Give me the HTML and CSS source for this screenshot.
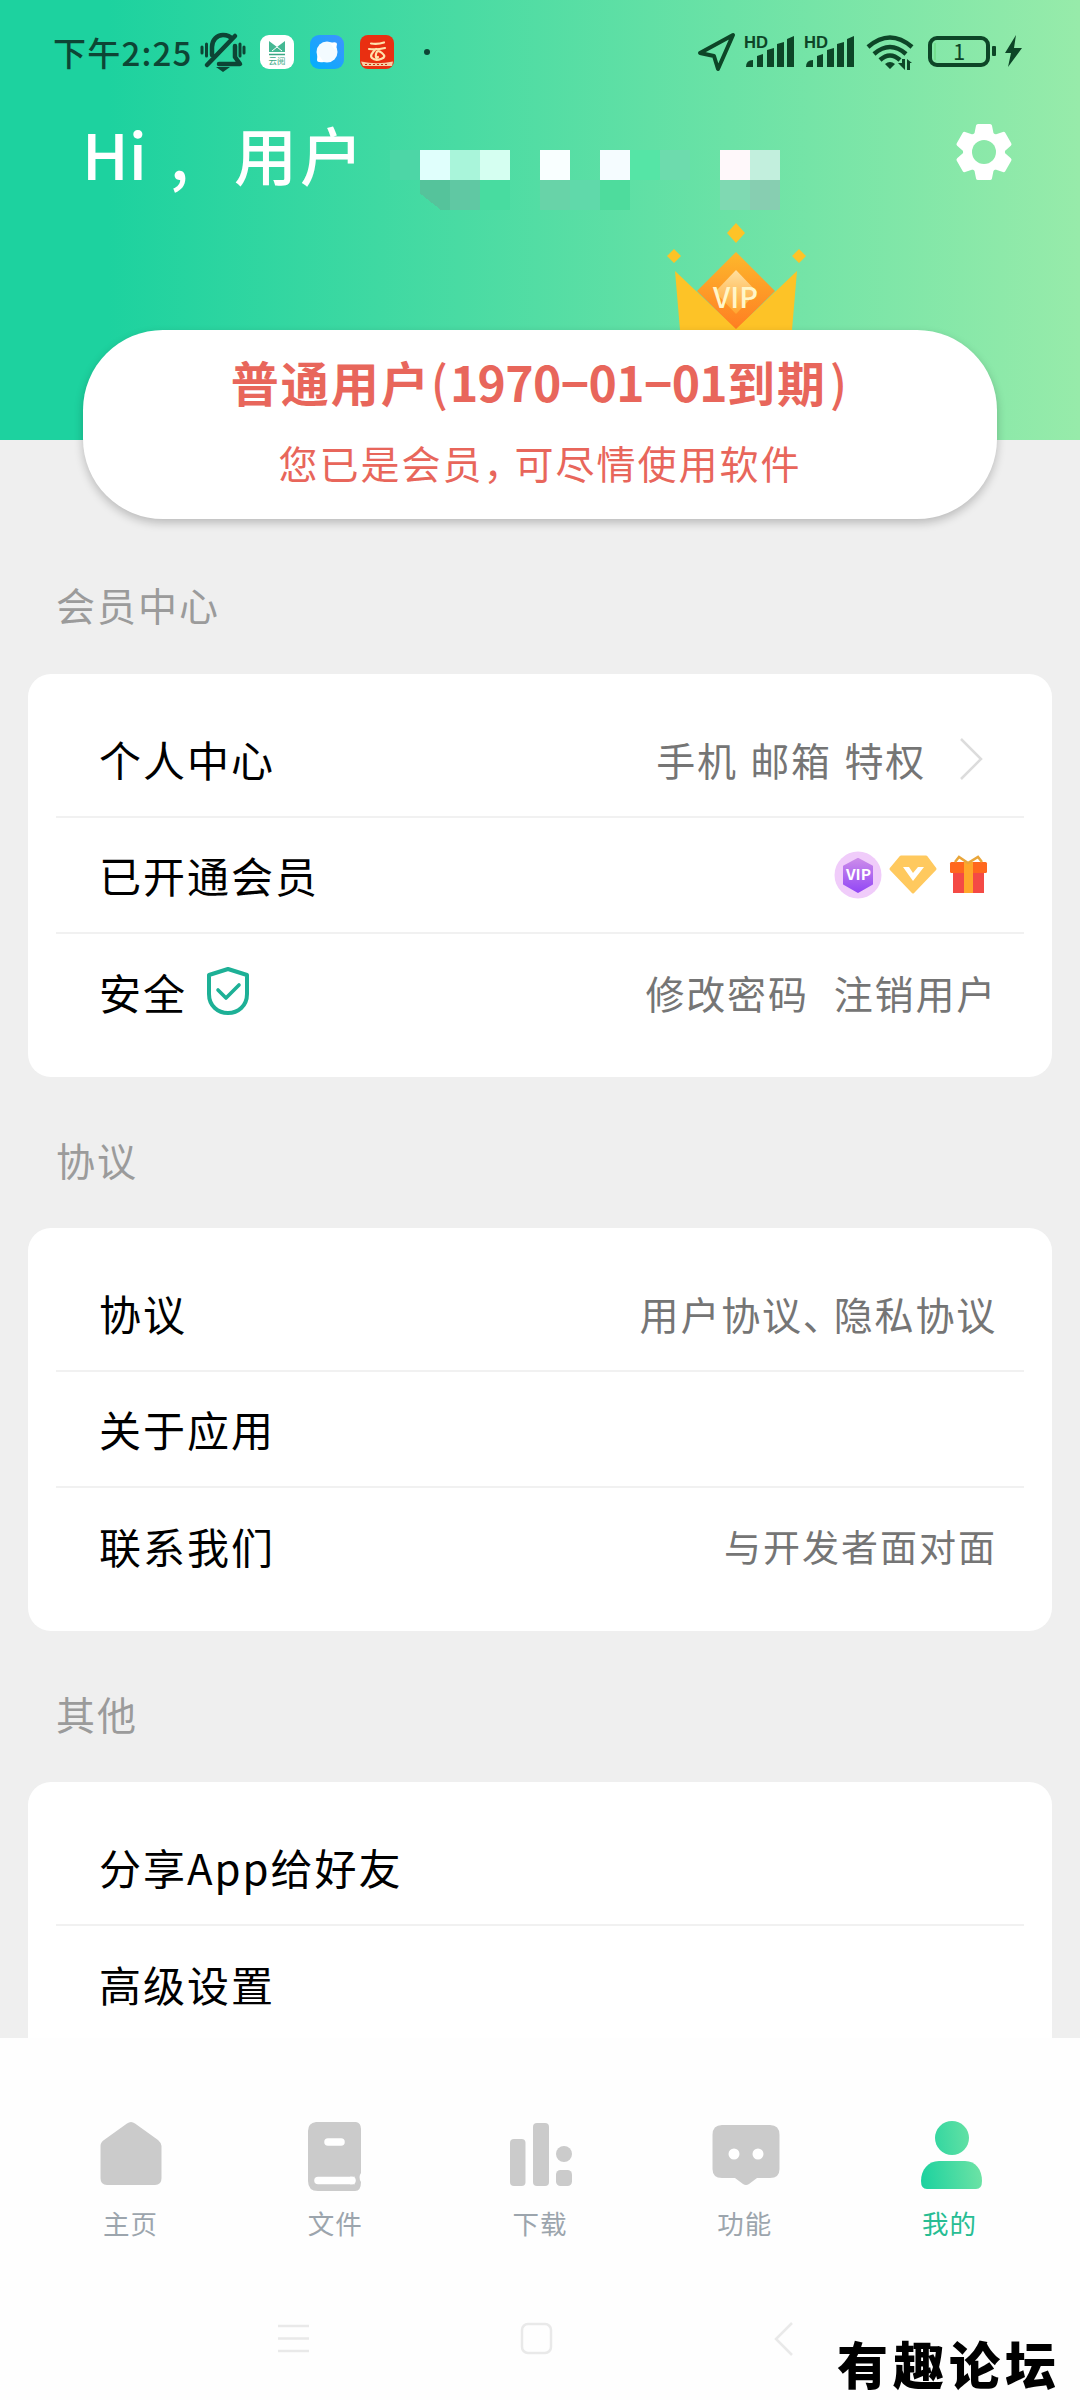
FILE: index.html
```html
<!DOCTYPE html>
<html lang="zh-CN">
<head>
<meta charset="utf-8">
<title>我的</title>
<link rel="stylesheet" href="styles.css">
</head>
<body>
<div class="screen">
  <header class="header">
    <div class="status">
      <span class="clock">下午2:25</span>
      <svg class="bell" width="46" height="40" viewBox="0 0 46 40" fill="none" stroke="#0d4535" stroke-width="4.500" stroke-linecap="round" stroke-linejoin="round">
        <path d="M7 33 35 4M12 23V15C12 8 17 3 23 3 27 3 30 4 32 7M35 14V25L40 32H19"/>
        <path d="M16 35H30L23 40Z" fill="#0d4535" stroke="none"/>
        <path d="M2 15V21M6.500 12V24M40 12V24M44 15V21" stroke-width="3"/>
      </svg>
      <svg class="app app-a" width="34" height="34" viewBox="0 0 34 34">
        <rect width="34" height="34" rx="9" fill="#fff"/>
        <path d="M9 6 17 12 25 6V17H9Z" fill="#45b893"/><path d="M12 16 17 12 22 16" stroke="#fff" fill="none"/>
        <path d="M9 19.500H25" stroke="#3aa784" stroke-width="1.500"/>
        <text x="17" y="28.500" text-anchor="middle" font-size="8.500" fill="#3aa784">云阅</text>
      </svg>
      <svg class="app app-b" width="34" height="34" viewBox="0 0 34 34">
        <defs><linearGradient id="blue" x1="1" y1="0" x2="0" y2="1"><stop stop-color="#3f93ff"/><stop offset="1" stop-color="#00b0fb"/></linearGradient></defs>
        <rect width="34" height="34" rx="9" fill="url(#blue)"/>
        <circle cx="17" cy="17" r="10.500" fill="#f3fbff"/><path d="M20 8Q27 6 27 9T25 15ZM14 27Q7 28 7 25T8 19Z" fill="#fff"/>
      </svg>
      <svg class="app app-c" width="34" height="34" viewBox="0 0 34 34">
        <rect width="34" height="34" rx="8" fill="#e92f11"/>
        <path d="M11 8.500Q18 9.500 24 7.500M9 14Q17 15 25 13M16 14Q9 20 12 23T21 24 22 18 16 19 18 22" stroke="#ffe3ad" stroke-width="2.200" fill="none" stroke-linecap="round"/>
        <path d="M1 26.500Q17 30 33 26.500L32 31H3Z" fill="#f7cfa5"/><path d="M5 29.500H29" stroke="#c8330f" stroke-width="1.200" stroke-dasharray="2 2"/>
      </svg>
      <span class="dot"></span>
      <svg class="signals" width="326" height="40" viewBox="0 0 326 40" fill="#0d4527">
        <path d="M3 21 36 3 21 37 17 24Z" fill="none" stroke="#0d4527" stroke-width="4" stroke-linejoin="round"/>
        <g id="sim"><text class="hd" x="47" y="15.500" font-size="16" font-weight="700" textLength="24" lengthAdjust="spacingAndGlyphs">HD</text>
        <path d="M49 35Q49 28 56 28V35ZM60 24 66 22V35H60ZM70 18 77 16V35H70ZM80 12 87 10V35H80ZM90 7 97 4V35H90Z"/></g>
        <use href="#sim" x="60"/>
        <g fill="none" stroke="#0d4527" stroke-width="4.500"><path d="M171 15Q193-4 215 15M177 22Q193 8 209 22M183 28Q193 19 203 28"/></g>
        <path d="M188 32Q193 28 198 32L193 37ZM201 31H205V27H208V38ZM210 38V27L215 31H213V38Z"/>
        <rect x="233" y="6" width="58" height="27" rx="7" fill="none" stroke="#0d4527" stroke-width="4"/>
        <rect x="295" y="14" width="4" height="10" rx="1"/><path d="M238 11V28" stroke="#64d777"/>
        <text x="256" y="28" font-size="22">1</text>
        <path d="M319 3 308 21H314L311 35 325 16H317Z"/>
      </svg>
    </div>

    <div class="greeting">
      <span class="hi">Hi</span><span class="comma">,</span><span class="name">用户</span>
      <svg class="mosaic" width="390" height="60" viewBox="0 0 13 2" shape-rendering="crispEdges">
        <path d="M0 0h1v1h-1z" fill="#4dd6a6"/><path d="M1 0h1v1h-1z" fill="#e0fffc"/><path d="M2 0h1v1h-1z" fill="#a9f5da"/><path d="M3 0h1v1h-1z" fill="#d5fff1"/>
        <path d="M5 0h1v1h-1z" fill="#f9ffff"/><path d="M7 0h1v1h-1z" fill="#f5fcff"/><path d="M8 0h1v1h-1z" fill="#55e5a6"/><path d="M9 0h1v1h-1z" fill="#6ddbad"/>
        <path d="M11 0h1v1h-1z" fill="#fff8fa"/><path d="M12 0h1v1h-1z" fill="#c2efdd"/>
        <path d="M1 1h1v1h-.3L1 1.450z" fill="#55c39b"/><path d="M2 1h1v1h-1z" fill="#60c8a3"/><path d="M3 1h1v1h-1z" fill="#48dca0"/><path d="M5 1h1v1h-1z" fill="#68d3a8"/><path d="M6 1h1v1h-1z" fill="#60d9aa"/><path d="M7 1h1v1h-1z" fill="#4edc9d"/>
        <path d="M11 1h1v1h-1z" fill="#7fd9b2"/><path d="M12 1h1v1h-1z" fill="#87ceb1"/>
      </svg>
      <svg class="gear" width="58" height="58" viewBox="-29 -29 58 58" fill="#fff">
        <defs><mask id="hole"><rect x="-29" y="-29" width="58" height="58" fill="#fff"/><circle r="12" fill="#000"/></mask></defs>
        <g mask="url(#hole)"><circle r="21"/>
        <g stroke="#fff" stroke-width="4" stroke-linejoin="round"><path d="M-6-26H6L8-16V16L6 26H-6L-8 16V-16Z"/><path d="M-6-26H6L8-16V16L6 26H-6L-8 16V-16Z" transform="rotate(60)"/><path d="M-6-26H6L8-16V16L6 26H-6L-8 16V-16Z" transform="rotate(120)"/></g></g>
      </svg>
    </div>

    <svg class="crown" width="140" height="108" viewBox="666 222 140 108">
      <defs>
        <linearGradient id="gem" x1="0" y1="0" x2="0" y2="1"><stop stop-color="#fdb82c"/><stop offset="1" stop-color="#ff7d22"/></linearGradient>
        <linearGradient id="core" x1="0" y1="0" x2="0" y2="1"><stop stop-color="#ffe0a0"/><stop offset="1" stop-color="#ffa52e"/></linearGradient>
      </defs>
      <path d="M736 223 745 233 736 243 727 233ZM674 249 681 256 674 263 667 256ZM799 249 806 256 799 263 792 256Z" fill="#fdc327"/>
      <path d="M736 252 775 291 736 330 697 291Z" fill="url(#gem)"/>
      <path d="M675 271 736 329 797 271 792 330H680Z" fill="#fdc327"/>
      <path d="M736 270 757 292 736 314 715 292Z" fill="url(#core)"/>
      <text x="713" y="308" font-size="28" font-weight="500" textLength="45" lengthAdjust="spacingAndGlyphs" fill="#fff6c8">VIP</text>
    </svg>
    <div class="member">
      <div class="level">普通用户<span class="paren">(</span><span class="date">1970−01−01</span>到期<span class="paren end">)</span></div>
      <div class="tip">您已是会员<span class="cm">，</span>可尽情使用软件</div>
    </div>
  </header>

  <main class="content">
    <h2 class="section">会员中心</h2>
    <section class="card">
      <div class="row"><span class="label">个人中心</span><span class="value">手机 邮箱 特权</span>
        <svg class="chev" width="24" height="44" viewBox="0 0 24 44" fill="none" stroke="#dcdcdc" stroke-width="2.500"><path d="M2 2 22 22 2 42"/></svg></div>
      <div class="row"><span class="label">已开通会员</span>
        <svg class="badges" width="154" height="48" viewBox="0 0 154 48">
          <defs><linearGradient id="hex" x1="0" y1="0" x2="0" y2="1"><stop stop-color="#cb8bea"/><stop offset="1" stop-color="#9348f5"/></linearGradient></defs>
          <circle cx="24" cy="24" r="23.500" fill="#f0ccfa"/>
          <path d="M24 8 38 15.500V33L24 41 10 33V15.500Z" fill="url(#hex)" stroke="url(#hex)" stroke-linejoin="round" stroke-width="2"/>
          <text x="12" y="29" font-size="15" font-weight="700" fill="#fff" textLength="25" lengthAdjust="spacingAndGlyphs">VIP</text>
          <path d="M67 6H92L101 18 79 41 57 18Z" fill="#ffc95e" stroke="#ffc95e" stroke-width="3" stroke-linejoin="round"/>
          <path d="M69 16H75L79 22 84 16H90L79 30Z" fill="#fff"/>
          <path d="M119 16H150V42H119Z" fill="#f44a45"/><rect x="116" y="11" width="37" height="11" rx="1.500" fill="#ff681e"/>
          <path d="M130 11H139V42H130Z" fill="#ffa72a"/><path d="M121 11 125 6 134 12 144 6 148 11" fill="none" stroke="#e9a63a" stroke-width="2.500"/>
        </svg></div>
      <div class="row"><span class="label">安全</span>
        <svg class="shield" width="44" height="50" viewBox="0 0 44 50" fill="none" stroke="#1db096" stroke-width="4" stroke-linejoin="round"><path d="M22 3 41 9V28C41 40 32 47 22 47S3 40 3 28V9Z"/><path d="M12 24 20 32 33 19" stroke-width="3.600" stroke-linecap="round"/></svg>
        <span class="value">修改密码  注销用户</span></div>
    </section>

    <h2 class="section">协议</h2>
    <section class="card">
      <div class="row"><span class="label">协议</span><span class="value">用户协议<span class="dun">、</span>隐私协议</span></div>
      <div class="row"><span class="label">关于应用</span></div>
      <div class="row"><span class="label">联系我们</span><span class="value small">与开发者面对面</span></div>
    </section>

    <h2 class="section">其他</h2>
    <section class="card">
      <div class="row"><span class="label">分享App给好友</span></div>
      <div class="row"><span class="label">高级设置</span></div>
    </section>
  </main>

  <footer class="footer">
    <nav class="tabs">
      <a class="tab"><svg width="70" height="70" viewBox="0 0 70 70" fill="#cbcbcb"><path d="M31 3.500Q35 .5 39 3.500L62 20Q65.500 23 65.500 26V58Q65.500 65 59 65H11Q4.500 65 4.500 58V26Q4.500 22.500 8 20Z"/></svg><span>主页</span></a>
      <a class="tab"><svg width="70" height="70" viewBox="0 0 70 70" fill="#cbcbcb"><path d="M15 2H55Q60 3 60 9V53Q57 57 60 62 60 71 54 71H17Q7 71 7 61V11Q7 3 15 2Z"/><path d="M17 60.500H51" stroke="#fff" stroke-width="7.500" stroke-linecap="round"/><path d="M49 56.700H54Q51 60 54 64.300H49Z" fill="#fff"/><path d="M27 22H40" stroke="#fff" stroke-width="7.500" stroke-linecap="round"/></svg><span>文件</span></a>
      <a class="tab"><svg width="70" height="70" viewBox="0 0 70 70" fill="#cbcbcb"><rect x="4" y="19" width="15.500" height="47" rx="4"/><rect x="27" y="3" width="16" height="63" rx="4"/><circle cx="58" cy="34" r="8"/><rect x="50" y="50" width="16" height="16" rx="4.500"/></svg><span>下载</span></a>
      <a class="tab"><svg width="70" height="70" viewBox="0 0 70 70" fill="#cbcbcb"><path d="M11 5H59Q68.500 5 68.500 15V49Q68.500 58 59 58H46L38 64Q35 66 32 64L24 58H11Q1.500 58 1.500 49V15Q1.500 5 11 5Z"/><circle cx="23" cy="34" r="5.500" fill="#fff"/><circle cx="47" cy="34" r="5.500" fill="#fff"/></svg><span>功能</span></a>
      <a class="tab active"><svg width="70" height="70" viewBox="0 0 70 70" fill="url(#me)"><defs><linearGradient id="me" gradientUnits="userSpaceOnUse" x1="5" y1="50" x2="66" y2="42"><stop stop-color="#1dd29f"/><stop offset="1" stop-color="#6fe3a5"/></linearGradient></defs><circle cx="36" cy="18" r="17"/><path d="M23 41H49C60 41 66 50 66 61Q66 69 60 69H11Q5 69 5 61C5 50 12 41 23 41Z"/></svg><span>我的</span></a>
    </nav>
    <div class="sysbar">
      <svg width="520" height="36" viewBox="0 0 520 36" fill="none" stroke="#e9e9e9" stroke-width="2.500"><path d="M1 5H32M1 17.500H32M1 30H32"/><rect x="245" y="3" width="29" height="29" rx="6"/><path d="M515 2 499 18 515 34"/></svg>
      <div class="mark">有趣论坛</div>
    </div>
  </footer>
</div>
</body>
</html>
```
FILE: styles.css
```css
* { box-sizing: border-box; }
body {
  margin: 0;
  font-family: "Noto Sans CJK SC", sans-serif;
}
.screen {
  width: 1080px;
  height: 2400px;
  display: flex;
  flex-direction: column;
  background: #efefef;
  overflow: hidden;
}
svg { display: block; flex: none; }

/* header */
.header {
  position: relative;
  flex: none;
  height: 440px;
  background: linear-gradient(90deg, #1dd29f 10%, #97ebaa 100%);
}
.status {
  display: flex;
  align-items: center;
  height: 72px;
  padding: 32px 0 0 53px;
}
.clock {
  width: 147px;
  font-size: 33px;
  line-height: 40px;
  letter-spacing: 1.2px;
  font-weight: 500;
  color: #0d4535;
  white-space: nowrap;
}
.bell { margin-right: 14px; }
.app-a, .app-b { margin-right: 16px; }
.app-c { margin-right: 30px; }
.dot { width: 6px; height: 6px; border-radius: 50%; background: #0d4535; }
.signals { margin-left: 267px; }
.hd { font-family: "Liberation Sans", sans-serif; }

.greeting {
  display: flex;
  height: 150px;
  color: #fff;
  font-size: 63px;
  font-weight: 500;
  line-height: 84px;
  white-space: nowrap;
}
.greeting span { margin-top: 39px; }
.hi { width: 88px; margin-left: 82px; }
.comma { width: 64px; }
.name { width: 156px; letter-spacing: 3px; }
.mosaic { margin-top: 78px; }
.gear { margin: 51px 0 0 175px; }

.crown { position: absolute; left: 666px; top: 222px; }
.member {
  position: absolute;
  left: 83px;
  top: 330px;
  width: 914px;
  height: 189px;
  padding-top: 17px;
  border-radius: 80px;
  background: #fff;
  box-shadow: 0 4px 10px rgba(0, 0, 0, .22);
  color: #e8665b;
  text-align: center;
  white-space: nowrap;
}
.level { font-size: 48px; font-weight: 700; line-height: 68px; letter-spacing: 2px; }
.date { letter-spacing: -.6px; }
.paren { font-weight: 500; }
.end { margin-left: 3px; }
.tip { margin-top: 15px; font-size: 39px; line-height: 64px; letter-spacing: 2px; }
.cm { letter-spacing: -8px; }

/* settings list */
.content { flex: 1; min-height: 0; overflow: hidden; padding: 79px 28px 0; }
.section {
  height: 151px;
  margin: 0;
  padding: 52px 0 0 28px;
  font-size: 39px;
  font-weight: 400;
  line-height: 60px;
  letter-spacing: 2px;
  color: #9b9b9b;
}
.content > .section:first-child { height: 155px; padding-top: 55px; }
.card {
  height: 403px;
  padding: 28px 28px 0;
  border-radius: 23px;
  background: #fff;
}
.row {
  display: flex;
  align-items: center;
  height: 116px;
  padding: 0 27px 0 43px;
  border-bottom: 2px solid #f1f1f1;
  white-space: pre;
}
.row:last-child { border-bottom: 0; }
.label { margin-top: -2px; font-size: 42px; letter-spacing: 2px; color: #000; }
.value { margin: -1px 0 0 auto; font-size: 39px; letter-spacing: 1.8px; word-spacing: 2px; color: #757575; }
.value.small { font-size: 37px; letter-spacing: 2px; }
.chev { margin: 0 14px 0 33px; }
.badges { margin: 0 9px 0 auto; }
.shield { margin: -2px 0 0 19px; }
.dun { letter-spacing: -8px; }

/* bottom bar */
.footer { flex: none; height: 362px; background: #fefefe; }
.tabs { display: flex; height: 240px; padding: 82px 27px 0 29px; }
.tab {
  flex: 1;
  display: flex;
  flex-direction: column;
  align-items: center;
  font-size: 26.5px;
  line-height: 40px;
  letter-spacing: 1px;
  color: #9ca5ad;
}
.tab svg { overflow: visible; }
.tab span { margin: 13px 2px 0 0; }
.active { color: #27bd93; }
.sysbar { display: flex; padding: 43px 0 0 277px; }
.mark {
  margin: 8px 0 0 40px;
  font-size: 51px;
  font-weight: 900;
  line-height: 68px;
  letter-spacing: 5px;
  white-space: nowrap;
  color: #000;
}
```
